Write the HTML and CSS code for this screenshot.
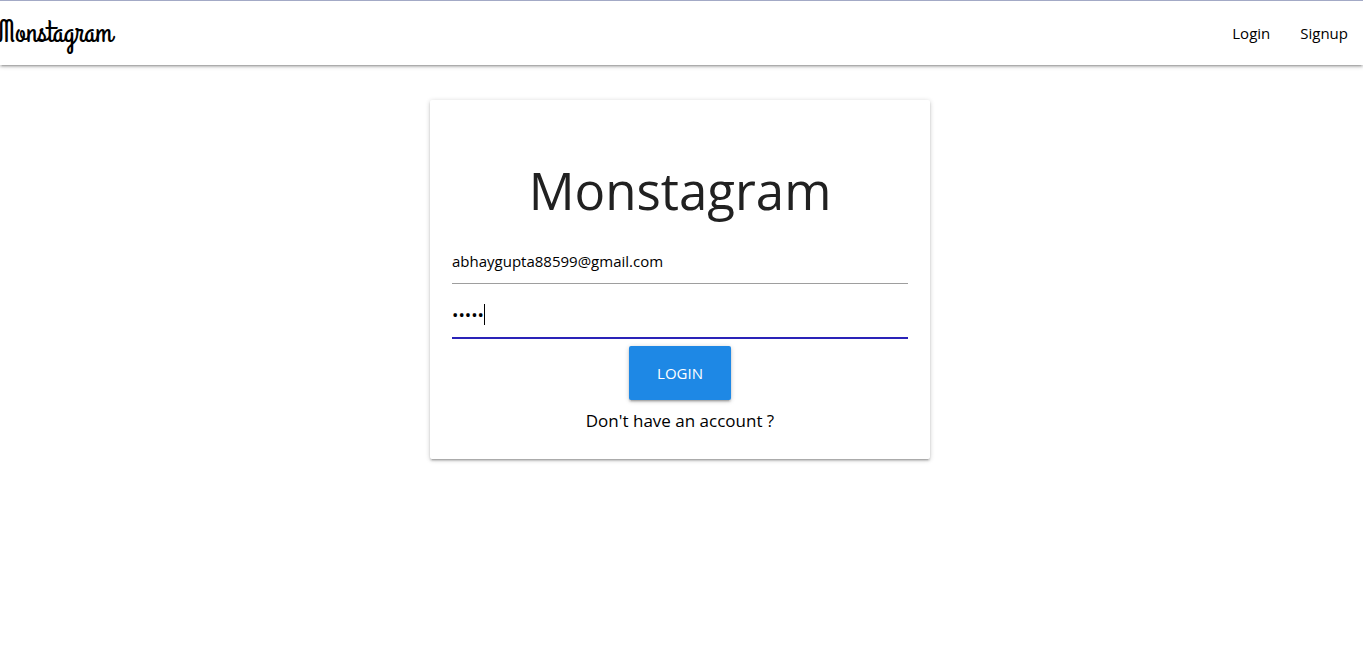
FILE: index.html
```html
<!DOCTYPE html>
<html lang="en">
<head>
<meta charset="utf-8">
<title>Monstagram</title>
<link rel="stylesheet" href="styles.css">
</head>
<body>
<nav class="navbar">
  <a class="brand" href="#">Monstagram</a>
  <div class="nav-links">
    <a href="#">Login</a>
    <a href="#">Signup</a>
  </div>
</nav>
<main class="page">
  <form class="card">
    <h2 class="title">Monstagram</h2>
    <input class="field" type="text" aria-label="Email" value="abhaygupta88599@gmail.com">
    <div class="password">
      <input class="field field-active" type="password" aria-label="Password" value="abcde">
      <span class="caret"></span>
    </div>
    <button class="submit" type="button">LOGIN</button>
    <a class="signup-link" href="#">Don't have an account ?</a>
  </form>
</main>
</body>
</html>
```
FILE: styles.css
```css
* { box-sizing: border-box; }

body {
  margin: 0;
  background: #fff;
  color: #000;
  font-family: "Segoe UI", "Open Sans", "Noto Sans", sans-serif;
  font-size: 15px;
}

a { color: inherit; text-decoration: none; }

.navbar {
  display: flex;
  align-items: center;
  justify-content: space-between;
  height: 65px;
  border-top: 1px solid #a3aac6;
  box-shadow: 0 2px 2px 0 rgba(0, 0, 0, .14), 0 3px 1px -2px rgba(0, 0, 0, .12), 0 1px 5px 0 rgba(0, 0, 0, .2);
}

.brand {
  margin-left: -2px;
  font-family: "Grand Hotel", "Liberation Serif", serif;
  font-size: 31px;
  line-height: 64px;
}

.nav-links { display: flex; }
.nav-links a { padding: 0 15px; line-height: 64px; }

.page { padding: 35px 19px 35px 16px; }

.card {
  display: flex;
  flex-direction: column;
  align-items: center;
  max-width: 500px;
  margin: 0 auto;
  padding: 55px 22px 25px;
  border-radius: 2px;
  box-shadow: 0 2px 2px 0 rgba(0, 0, 0, .14), 0 3px 1px -2px rgba(0, 0, 0, .12), 0 1px 5px 0 rgba(0, 0, 0, .2);
}

.title {
  margin: 0 0 13px;
  color: #212121;
  font-size: 51px;
  font-weight: 400;
  line-height: 70px;
}

.field {
  width: 100%;
  height: 46px;
  margin: 0 0 8px;
  padding: 0;
  border: 0;
  border-bottom: 1px solid #9e9e9e;
  outline: 0;
  background: transparent;
  color: #000;
  font-family: inherit;
  font-size: 15px;
}

.field-active {
  height: 47px;
  margin-bottom: 7px;
  border-bottom: 2px solid #2a23b8;
  font-size: 17px;
}

.password { position: relative; width: 100%; }

.caret {
  position: absolute;
  top: 12px;
  left: 32px;
  width: 1px;
  height: 21px;
  background: #000;
}

.submit {
  height: 54px;
  padding: 0 28px;
  border: 0;
  border-radius: 2px;
  background: #1e88e5;
  color: #fff;
  font-family: inherit;
  font-size: 15px;
  box-shadow: 0 2px 2px 0 rgba(0, 0, 0, .14), 0 3px 1px -2px rgba(0, 0, 0, .12), 0 1px 5px 0 rgba(0, 0, 0, .2);
}

.signup-link { margin-top: 8px; font-size: 17px; line-height: 26px; }
```
